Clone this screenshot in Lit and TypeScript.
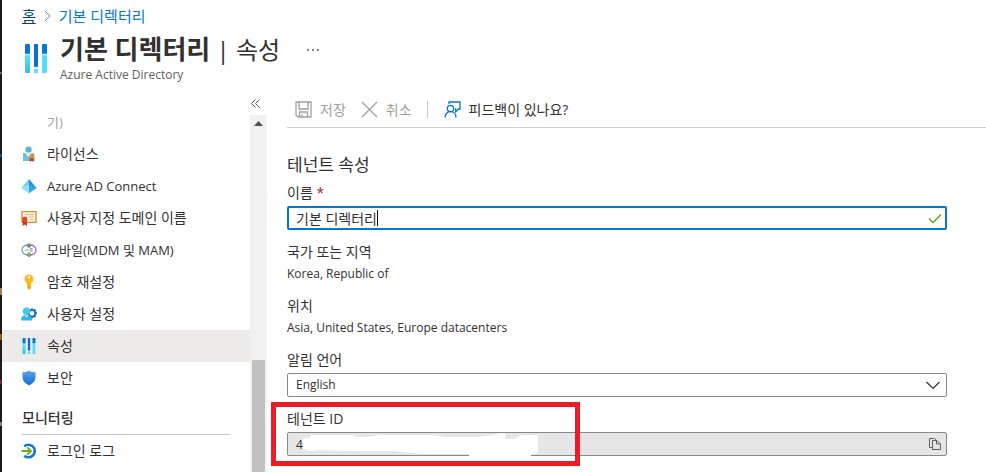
import { LitElement, html, css, svg, TemplateResult } from "lit";
import { customElement, state } from "lit/decorators.js";
import { classMap } from "lit/directives/class-map.js";

const bars = svg`
  <rect x="1" y="0" width="5" height="11" rx="1" fill="#0078d4"/>
  <rect x="1" y="11" width="5" height="18" rx="1" fill="url(#cyan)"/>
  <rect x="10" y="0" width="4" height="24" rx="1" fill="#0f6cd0"/>
  <rect x="10" y="25" width="4" height="4" rx="1" fill="#50e6ff"/>
  <rect x="18" y="0" width="5" height="11" rx="1" fill="#0078d4"/>
  <rect x="18" y="11" width="5" height="18" rx="1" fill="#50e0fb"/>
  <path d="M0 10.5h7M9 23.500h6M17 10.500h7" stroke="#dce4ea" stroke-width="1.500"/>
  <defs><linearGradient id="cyan" x1="0" y1="0" x2="0" y2="1"><stop offset="0" stop-color="#50e6ff"/><stop offset="1" stop-color="#32bedd"/></linearGradient></defs>`;

const icons: Record<string, TemplateResult> = {
  license: html`<svg viewBox="0 0 16 16" width="16" height="16">
    <circle cx="7.500" cy="3.600" r="3.200" fill="#5ab4d9"/>
    <path d="M2 7h2.500l3 3.500L10.500 7H12q1.500 0 1.500 1.500V15H2z" fill="#6bbfe0"/><path d="M4.500 7h6l-3 4z" fill="#e8f6fb"/>
    <path d="M8.800 11h3.800v5l-1.900-1.200L8.800 16z" fill="#b8431c"/><circle cx="10.700" cy="10.300" r="2.300" fill="#f0901d"/></svg>`,
  connect: html`<svg viewBox="0 0 16 16" width="16" height="16">
    <path d="M8 1L0.500 10 8 15z" fill="#5fd0f3"/><path d="M8 1l7.500 9L8 15z" fill="#2b8fe0"/>
    <path d="M8 6L.5 10 8 15z" fill="#8fe2fa"/><path d="M8 7l7.500 3L8 15z" fill="#3aa5e6"/></svg>`,
  domain: html`<svg viewBox="0 0 16 16" width="16" height="16">
    <rect x="1" y="1.700" width="14" height="10.600" fill="#fff" stroke="#f08a24" stroke-width="1.400"/>
    <path d="M4 4.600h9M7 7h6M9 9.500h4" stroke="#f4b06c" stroke-width="1.200"/>
    <path d="M1.600 10h4.400v6l-2.200-1.600L1.600 16z" fill="#c8391f"/><circle cx="3.800" cy="9.300" r="2.700" fill="#d94f24"/></svg>`,
  mobile: html`<svg viewBox="0 0 16 16" width="16" height="16" fill="none">
    <path d="M7 3.500a4.700 4.700 0 1 0 0 9" stroke="#6f9fc8" stroke-width="1.300"/>
    <path d="M9 3.500a4.700 4.700 0 1 1 0 9" stroke="#9a6bc0" stroke-width="1.300"/>
    <path d="M5.600 3.700L8 1.800l2.300 1.900M5.500 12.500L8 14.400l2.400-1.900" stroke="#7a6fae" stroke-width="1.200"/>
    <circle cx="8" cy="4.200" r="1.600" fill="#5e9e34"/><circle cx="8" cy="11.700" r="1.600" fill="#7fba3d"/>
    <path d="M4.500 8h3M9 6.800h2.500M9 9h2.500" stroke="#767fb8" stroke-width="1.200"/></svg>`,
  key: html`<svg viewBox="0 0 16 16" width="16" height="16">
    <path fill-rule="evenodd" d="M8 .5a4.500 4.500 0 0 1 4.500 4.500c0 2-1 3.300-2.500 4v5.500L8.300 16 6 14v-1.300l.8-.9-.8-.9V9C4.500 8.300 3.500 7 3.500 5A4.500 4.500 0 0 1 8 .5zM8 2a1.200 1.200 0 1 0 0 2.400A1.200 1.200 0 0 0 8 2z" fill="#fcb91c"/>
    <path d="M7.500 9v5.500" stroke="#ee9a0b"/></svg>`,
  user: html`<svg viewBox="0 0 16 16" width="16" height="16">
    <circle cx="11" cy="7.300" r="3.300" fill="none" stroke="#0f72cf" stroke-width="1.800"/>
    <path d="M11 2.500v2M11 10v2.300M14.200 7.300H16M13.300 4.700l1.200-1.200M13.300 9.800l1.200 1.200" stroke="#0f72cf" stroke-width="2"/>
    <path d="M0 14.500c0-3.500 2-5.500 5.500-5.500s5.700 2 5.700 5.500z" fill="#2cb9e8"/><circle cx="5.500" cy="5.300" r="3.800" fill="#41c6ec"/>
    <path d="M3.500 9.400l2 2.200 2-2.200z" fill="#d3f3fc"/></svg>`,
  properties: html`<svg viewBox="0 0 24 29" width="14" height="16" preserveAspectRatio="none">${bars}</svg>`,
  shield: html`<svg viewBox="0 0 16 16" width="16" height="16">
    <defs><linearGradient id="sh" x1="0" y1="0" x2="0" y2="1"><stop offset="0" stop-color="#5ea0ef"/><stop offset="1" stop-color="#0f6fd4"/></linearGradient></defs>
    <path d="M8 .5c2 1.500 4 1.600 6.500 1.800v5.200c0 4-3.500 6-6.500 8-3-2-6.500-4-6.500-8V2.300C4 2.100 6 2 8 .5z" fill="url(#sh)"/></svg>`,
  signin: html`<svg viewBox="0 0 16 16" width="16" height="16" fill="none">
    <path d="M3.300 3.300A6.300 6.300 0 1 1 3.300 12.700" stroke="#0f78c8" stroke-width="2.600"/>
    <path d="M.5 8h9.200M6.300 4.300L10 8l-3.700 3.700" stroke="#6aaf1e" stroke-width="1.900"/></svg>`,
};

interface Item { icon: string; label: string; latin?: boolean; }

@customElement("app-root")
export class AppRoot extends LitElement {
  static styles = css`
    :host {
      display: grid;
      grid-template-columns: 2px minmax(0, 1fr);
      height: 100vh;
      overflow: hidden;
      background: #fff;
      color: #323130;
      font: 14px/20px "Open Sans", "Noto Sans CJK KR", sans-serif;
    }
    * { box-sizing: border-box; }
    svg { display: block; flex: none; }
    button { border: 0; padding: 0; background: none; font: inherit; color: inherit; display: flex; align-items: center; }
    .edge {
      background:
        linear-gradient(transparent 0 72px, #666 72px 74px, transparent 74px 154px, #17537d 154px 157px, transparent 157px 288px, #9c7b51 288px 295px, transparent 295px 334px, #8c5b2c 334px 340px, transparent 340px 380px, #7b2432 380px 384px, transparent 384px 422px, #8a7a60 422px 426px, transparent 426px),
        #1b1b1e;
    }
    .page { display: flex; flex-direction: column; min-height: 0; }
    .crumbs { display: flex; align-items: center; gap: 8px; height: 32px; padding-left: 20px; font-size: 15px; }
    .crumbs a { color: #0078d4; text-decoration: none; }
    .crumbs a.home { color: #004578; text-decoration: underline; }
    .head { display: flex; align-items: flex-start; gap: 12px; height: 62px; padding-left: 22px; }
    .head .logo { margin-top: 12px; }
    .titles { display: flex; flex-direction: column; }
    h1 { margin: 0; font-size: 24px; line-height: 35px; font-weight: 400; white-space: nowrap; }
    h1 b { font-size: 26px; font-weight: 700; }
    .sub { font-size: 12px; line-height: 16px; color: #605e5c; }
    .more { margin: 16px 0 0 14px; }
    .body { display: grid; grid-template-columns: 265px minmax(0, 1fr); flex: 1; min-height: 0; }
    .side { display: flex; flex-direction: column; min-height: 0; }
    .collapse { align-self: flex-end; height: 12px; padding-top: 6px; margin-right: 7px; }
    .scroll { display: grid; grid-template-columns: minmax(0, 1fr) 17px; flex: 1; min-height: 0; }
    nav { overflow: hidden; min-height: 0; }
    nav ul { list-style: none; margin: 0; padding: 0; }
    nav a { display: flex; align-items: center; gap: 10px; height: 32px; padding-left: 19px; color: inherit; text-decoration: none; white-space: nowrap; }
    nav a.sel { background: #edebe9; }
    nav a.faded { color: #a19f9d; padding-left: 45px; font-size: 13px; }
    .ico { width: 16px; display: flex; justify-content: center; }
    .latin { font-size: 13px; }
    h3 { margin: 12px 20px 0; height: 29px; border-bottom: 1px solid #c8c6c4; font-size: 14px; line-height: 24px; font-weight: 500; }
    .bar { background: #f1f1f1; display: flex; flex-direction: column; align-items: center; margin-top: 9px; }
    .bar .up { margin-top: 6px; }
    .thumb { width: 13px; background: #c1c1c1; flex: 1; margin-top: 234px; }
    main { min-width: 0; padding-left: 20px; }
    .tools { display: flex; align-items: center; height: 34px; border-bottom: 1px solid #d2d0ce; padding: 0 0 2px 8px; }
    .tools button { gap: 8px; white-space: nowrap; }
    .tools .off { color: #a19f9d; margin-right: 15px; }
    .tools .sep { width: 1px; height: 17px; background: #c8c6c4; margin-right: 16px; }
    form { display: flex; flex-direction: column; gap: 12px; margin: 27px 39px 0 0; }
    h2 { margin: 0 0 -4px; font-size: 17px; line-height: 20px; font-weight: 400; }
    .field { display: flex; flex-direction: column; gap: 3px; }
    .field.text { gap: 2px; }
    .val { font-size: 12px; }
    .req { color: #a4262c; }
    .box { position: relative; display: flex; }
    .box input, .box select {
      flex: 1; min-width: 0; height: 24px; margin: 0; padding: 0 8px; border: 1px solid #8a8886; border-radius: 2px;
      background: #fff; color: inherit; font: inherit; font-size: 12px; outline: none; appearance: none;
    }
    .box input.name { border: 2px solid #0078d4; padding: 0 7px; font-size: 14px; }
    .box input.ro { background: #e6e6e6; }
    .box .end { position: absolute; right: 6px; top: 4px; pointer-events: none; }
    .caret { position: absolute; left: 90px; top: 4px; width: 1px; height: 16px; background: #111; }
    .scribble { position: absolute; left: 16px; top: 1px; }
    .mark { position: absolute; left: -16px; top: -30px; width: 309px; height: 64px; border: 5px solid #ed1c24; pointer-events: none; }
  `;

  @state() private selected = "속성";

  private items: Item[] = [
    { icon: "license", label: "라이선스" },
    { icon: "connect", label: "Azure AD Connect", latin: true },
    { icon: "domain", label: "사용자 지정 도메인 이름" },
    { icon: "mobile", label: "모바일(MDM 및 MAM)", latin: true },
    { icon: "key", label: "암호 재설정" },
    { icon: "user", label: "사용자 설정" },
    { icon: "properties", label: "속성" },
    { icon: "shield", label: "보안" },
  ];

  private row(i: Item) {
    return html`<li><a href="#" class=${classMap({ sel: i.label === this.selected, latin: !!i.latin })}
      @click=${(e: Event) => { e.preventDefault(); this.selected = i.label; }}>
      <span class="ico">${icons[i.icon]}</span><span>${i.label}</span></a></li>`;
  }

  render() {
    return html`
      <div class="edge"></div>
      <div class="page">
        <div class="crumbs">
          <a class="home" href="#">홈</a>
          <svg width="7" height="12" fill="none" stroke="#8a8886"><path d="M1 1l5 5-5 5"/></svg>
          <a href="#">기본 디렉터리</a>
        </div>
        <header class="head">
          <svg class="logo" width="24" height="29" viewBox="0 0 24 29">${bars}</svg>
          <div class="titles">
            <h1><b>기본 디렉터리</b> | 속성</h1>
            <span class="sub">Azure Active Directory</span>
          </div>
          <button class="more" aria-label="더 보기">
            <svg width="14" height="4" fill="#605e5c"><circle cx="2" cy="2" r="1"/><circle cx="7" cy="2" r="1"/><circle cx="12" cy="2" r="1"/></svg>
          </button>
        </header>
        <div class="body">
          <aside class="side">
            <button class="collapse" aria-label="메뉴 접기">
              <svg width="9" height="9" fill="none" stroke="#605e5c"><path d="M4.500 .5l-4 4 4 4M8.500 .5l-4 4 4 4"/></svg>
            </button>
            <div class="scroll">
              <nav>
                <ul>
                  <li><a class="faded" href="#">기)</a></li>
                  ${this.items.map((i) => this.row(i))}
                </ul>
                <h3>모니터링</h3>
                <ul>${this.row({ icon: "signin", label: "로그인 로그" })}</ul>
              </nav>
              <div class="bar">
                <svg class="up" width="9" height="5"><path d="M0 5l4.500-5L9 5z" fill="#505050"/></svg>
                <div class="thumb"></div>
              </div>
            </div>
          </aside>
          <main>
            <div class="tools">
              <button class="off" disabled>
                <svg width="17" height="17" fill="none" stroke="#a19f9d" stroke-width="1.300"><path d="M1 1h15v15H3l-2-2zM4 1v7h9V1M4.500 16v-5h8v5M7 13v3"/></svg>저장</button>
              <button class="off" disabled>
                <svg width="17" height="17" fill="none" stroke="#a19f9d" stroke-width="1.300"><path d="M1 1l15 15M16 1L1 16"/></svg>취소</button>
              <span class="sep"></span>
              <button>
                <svg width="17" height="17" fill="none" stroke="#0078d4" stroke-width="1.300"><path d="M5 3V1h11v7h-1.500l-2.800 2.800V8H11"/><circle cx="6.500" cy="7.500" r="3.200"/><path d="M1 16.500c0-3.500 2.500-5.800 5.500-5.800s5.500 2.300 5.500 5.800"/></svg>피드백이 있나요?</button>
            </div>
            <form @submit=${(e: Event) => e.preventDefault()}>
              <h2>테넌트 속성</h2>
              <div class="field">
                <label for="name">이름 <span class="req">*</span></label>
                <div class="box">
                  <input id="name" class="name" value="기본 디렉터리">
                  <span class="caret"></span>
                  <svg class="end" width="12" height="16" fill="none" stroke="#57a300" stroke-width="1.300"><path d="M0 8.500l4 4L12 4.500"/></svg>
                </div>
              </div>
              <div class="field text"><span>국가 또는 지역</span><span class="val">Korea, Republic of</span></div>
              <div class="field text"><span>위치</span><span class="val">Asia, United States, Europe datacenters</span></div>
              <div class="field">
                <label for="lang">알림 언어</label>
                <div class="box">
                  <select id="lang"><option>English</option></select>
                  <svg class="end" width="16" height="16" fill="none" stroke="#323130" stroke-width="1.200"><path d="M1.500 5L8 11.500 14.500 5"/></svg>
                </div>
              </div>
              <div class="field">
                <label for="tid">테넌트 ID</label>
                <div class="box">
                  <input id="tid" class="ro" readonly value="4">
                  <svg class="scribble" width="238" height="24" fill="#fff"><path d="M0 5H7L8 2H50L54 4H66L76 2H130L142 4H175L190 2 198 0H202V6H212L218 2H235V20L228 21V24H166V21H130L110 20 90 18H52L13 17 10 18H5L0 16z"/></svg>
                  <svg class="end" width="12" height="16" fill="none" stroke="#605e5c"><path d="M3.500 11.500H.5v-9h5l2 2M3.500 4.500h4.500l3.500 3.500v5.500h-8zM7.500 4.500v3.500h4"/></svg>
                  <div class="mark"></div>
                </div>
              </div>
            </form>
          </main>
        </div>
      </div>`;
  }
}
